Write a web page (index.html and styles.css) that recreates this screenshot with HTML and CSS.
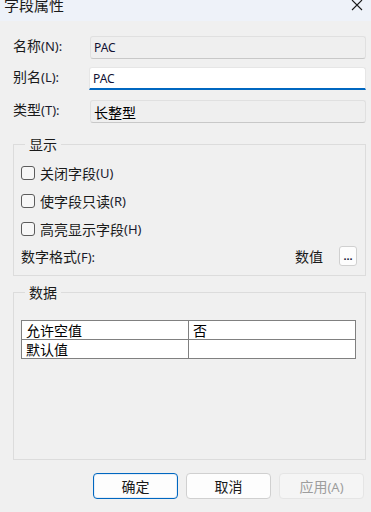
FILE: index.html
```html
<!DOCTYPE html>
<html>

<head>
    <title>字段属性</title>
    <link rel="stylesheet" href="styles.css">
</head>

<body>
    <div class="titlebar">
        <span class="title">字段属性</span>
        <svg class="close" width="12" height="12" viewBox="0 0 12 12">
            <path d="M1 0 L11 10 M11 0 L1 10" stroke="#1a1a1a" stroke-width="1.1" fill="none" />
        </svg>
    </div>

    <div class="dialog">
        <div class="row row-name">
            <label class="label">名称<span class="key">(N):</span></label>
            <div class="field field-disabled">PAC</div>
        </div>
        <div class="row row-alias">
            <label class="label">别名<span class="key">(L):</span></label>
            <div class="field field-edit">PAC</div>
        </div>
        <div class="row row-type">
            <label class="label">类型<span class="key">(T):</span></label>
            <div class="field field-disabled field-song">长整型</div>
        </div>

        <fieldset class="group group-show">
            <legend>显示</legend>
            <div class="check"><span class="box"></span>关闭字段<span class="key">(U)</span></div>
            <div class="check"><span class="box"></span>使字段只读<span class="key">(R)</span></div>
            <div class="check"><span class="box"></span>高亮显示字段<span class="key">(H)</span></div>
            <div class="format">
                <span>数字格式<span class="key">(F):</span></span>
                <span class="spacer"></span>
                <span class="format-value">数值</span>
                <button class="dots">...</button>
            </div>
        </fieldset>

        <fieldset class="group group-data">
            <legend>数据</legend>
            <table class="grid">
                <tr>
                    <td class="name">允许空值</td>
                    <td>否</td>
                </tr>
                <tr>
                    <td class="name">默认值</td>
                    <td></td>
                </tr>
            </table>
        </fieldset>

        <div class="buttons">
            <button class="btn btn-default">确定</button>
            <button class="btn">取消</button>
            <button class="btn btn-disabled">应用<span class="key">(A)</span></button>
        </div>
    </div>
</body>

</html>
```

FILE: styles.css
```css
body {
    margin: 0;
    padding: 0;
    width: 371px;
    height: 512px;
    overflow: hidden;
    background: #f0f0f0;
    font-family: "Noto Sans CJK SC", sans-serif;
    font-size: 14px;
    color: #1a1a1a;
}

/* latin mnemonic part, like "(N):" */
.key {
    font-family: "Segoe UI", "Noto Sans", sans-serif;
    font-size: 13px;
    color: #1a1a2e;
}

.titlebar {
    height: 21px;
    background: #eef2f9;
    display: flex;
    align-items: flex-start;
    justify-content: space-between;
    overflow: hidden;
}

.title {
    font-size: 15px;
    line-height: 15px;
    margin-top: -3px;
    margin-left: 4px;
}

.close {
    margin-right: 8px;
}

.dialog {
    display: flex;
    flex-direction: column;
    padding: 0 5px 0 13px;
}

.row {
    display: flex;
    align-items: center;
}

.row-name {
    margin-top: 15px;
}

.row-alias {
    margin-top: 8px;
}

.row-type {
    margin-top: 10px;
}

.label {
    width: 77px;
    position: relative;
    top: -3px;
}

.field {
    flex: 1;
    height: 23px;
    box-sizing: border-box;
    padding-left: 3px;
    display: flex;
    align-items: center;
    font-family: "Segoe UI", "Noto Sans", sans-serif;
    font-size: 12px;
    color: #111133;
}

.field-disabled {
    background: #efefef;
    border: 1px solid #e0e0e0;
    border-bottom-color: #c8c8c8;
    border-radius: 3px;
}

.field-edit {
    background: #ffffff;
    border: 1px solid #e6e6e6;
    border-bottom: 2px solid #0067c0;
    border-radius: 3px 3px 0 0;
    margin-left: -1px;
}

.field-song {
    font-family: "Noto Sans CJK SC", sans-serif;
    font-size: 14px;
    color: #000;
}

.group {
    margin: 0;
    border: 1px solid #dcdcdc;
    padding: 0 7px;
}

.group legend {
    font-size: 14px;
    padding: 0 4px;
    margin-left: 4px;
    line-height: 20px;
}

.group-show {
    margin-top: 11px;
    height: 142px;
    box-sizing: border-box;
    padding-top: 5px;
}

.check {
    display: flex;
    align-items: center;
    height: 28px;
}

.box {
    width: 12px;
    height: 12px;
    border: 1px solid #5c5c5c;
    border-radius: 3px;
    background: #f7f7f7;
    margin-right: 5px;
}

.format {
    display: flex;
    align-items: center;
    height: 26px;
}

.spacer {
    flex: 1;
}

.format-value {
    margin-right: 16px;
}

.dots {
    width: 18px;
    height: 20px;
    padding: 0;
    border: 1px solid #d0d0d0;
    border-radius: 3px;
    background: #fdfdfd;
    font-size: 11px;
    font-weight: bold;
    color: #1a1a40;
    line-height: 14px;
    margin-right: 1px;
}

.group-data {
    margin-top: 6px;
    height: 178px;
    box-sizing: border-box;
    padding-top: 18px;
}

.grid {
    width: 335px;
    border-collapse: collapse;
    background: #fff;
    font-size: 14px;
    color: #000;
}

.grid td {
    border: 1px solid #808080;
    height: 18px;
    padding: 0 4px;
    line-height: 18px;
}

.grid td.name {
    width: 158px;
}

.buttons {
    display: flex;
    justify-content: flex-end;
    gap: 8px;
    margin-top: 13px;
    padding-right: 2px;
}

.btn {
    width: 85px;
    height: 26px;
    background: #fdfdfd;
    border: 1px solid #d0d0d0;
    border-radius: 4px;
    font-family: "Noto Sans CJK SC", sans-serif;
    font-size: 14px;
    color: #1a1a1a;
    padding: 0;
}

.btn-default {
    border: 1px solid #0067c0;
    box-shadow: inset 0 0 0 1px #e6eef8;
}

.btn-disabled {
    background: #f5f5f5;
    border-color: #e5e5e5;
    color: #9d9d9d;
}

.btn-disabled .key {
    color: #9d9d9d;
}
```
